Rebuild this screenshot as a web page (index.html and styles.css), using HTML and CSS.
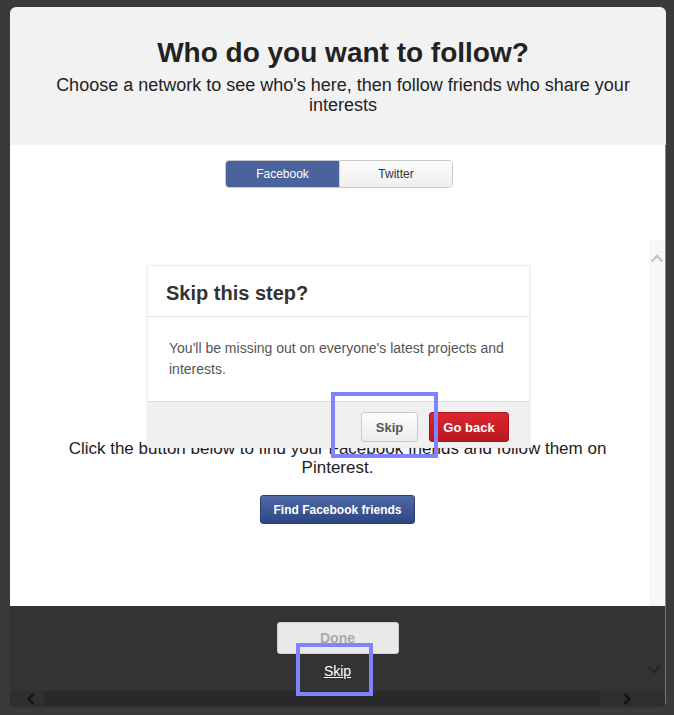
FILE: index.html
```html
<!doctype html>
<html lang="en">
<head>
    <meta charset="utf-8">
    <meta name="viewport" content="width=device-width, initial-scale=1.0">
    <title>Who do you want to follow?</title>
    <link rel="stylesheet" href="styles.css">
</head>
<body>
    <div class="modal">
        <div class="modal-header">
            <h1>Who do you want to follow?</h1>
            <p>Choose a network to see who's here, then follow friends who share your interests</p>
        </div>
        <div class="modal-content">
            <div class="tabs">
                <button class="tab active">Facebook</button>
                <button class="tab">Twitter</button>
            </div>
            <p class="find-text">Click the button below to find your Facebook friends and follow them on Pinterest.</p>
            <button class="fb-button">Find Facebook friends</button>

            <div class="v-scroll">
                <svg width="14" height="9" viewBox="0 0 14 9"><path d="M1.5 7.5 L7 2 L12.5 7.5" fill="none" stroke="#c4c4c4" stroke-width="2.4"/></svg>
            </div>

            <div class="dialog">
                <div class="dialog-header">Skip this step?</div>
                <div class="dialog-body">You'll be missing out on everyone's latest projects and interests.</div>
                <div class="dialog-footer">
                    <button class="btn-skip">Skip</button>
                    <button class="btn-back">Go back</button>
                </div>
                <div class="highlight dialog-highlight"></div>
            </div>
        </div>
        <div class="modal-footer">
            <button class="btn-done">Done</button>
            <a href="#" class="skip-link">Skip</a>
            <div class="highlight footer-highlight"></div>
            <svg class="down-arrow" width="14" height="9" viewBox="0 0 14 9"><path d="M1.5 1.5 L7 7 L12.5 1.5" fill="none" stroke="#262626" stroke-width="2.4"/></svg>
            <div class="h-scroll">
                <svg class="arrow-left" width="12" height="14" viewBox="0 0 12 14"><path d="M8.5 2 L3.5 7 L8.5 12" fill="none" stroke="#141414" stroke-width="2.6"/></svg>
                <div class="h-thumb"></div>
                <svg class="arrow-right" width="12" height="14" viewBox="0 0 12 14"><path d="M3.5 2 L8.5 7 L3.5 12" fill="none" stroke="#141414" stroke-width="2.6"/></svg>
            </div>
        </div>
    </div>
</body>
</html>
```

FILE: styles.css
```css
body {
    margin: 0;
    padding: 0;
    background-color: #3a3a3a;
    font-family: "Liberation Sans", Arial, sans-serif;
}
.modal {
    width: 656px;
    height: 701px;
    margin: 7px 0 0 10px;
    border-radius: 6px;
    overflow: hidden;
    display: flex;
    flex-direction: column;
}
.modal-header {
    height: 138px;
    box-sizing: border-box;
    padding: 30px 28px 0 38px;
    background-color: #f2f2f2;
    text-align: center;
    color: #222;
}
.modal-header h1 {
    margin: 0;
    font-size: 28px;
    line-height: 32px;
    font-weight: bold;
}
.modal-header p {
    margin: 6px 0 0;
    font-size: 18px;
    line-height: 20px;
}
.modal-content {
    position: relative;
    height: 461px;
    box-sizing: border-box;
    padding-top: 15px;
    background-color: #fff;
    border-right: 1px solid #8a8a8a;
    text-align: center;
}
.tabs {
    display: inline-flex;
    margin-left: 3px;
    border: 1px solid #c9c9c9;
    border-radius: 4px;
    overflow: hidden;
}
.tab {
    width: 113px;
    height: 26px;
    border: none;
    margin: 0;
    padding: 0;
    font-family: inherit;
    font-size: 12px;
    color: #333;
    background: linear-gradient(#fdfdfd, #efefef);
    border-left: 1px solid #d0d0d0;
}
.tab.active {
    background: #4a639c;
    color: #fff;
    border-left: none;
}
.find-text {
    width: 580px;
    margin: 251px auto 0;
    font-size: 17px;
    line-height: 19px;
    color: #222;
}
.fb-button {
    margin-top: 18px;
    width: 155px;
    height: 29px;
    border: 1px solid #2b3f75;
    border-radius: 3px;
    background: linear-gradient(#4f6aa6, #2e4684);
    color: #fff;
    font-family: inherit;
    font-size: 12px;
    font-weight: bold;
}
.v-scroll {
    position: absolute;
    right: 0;
    top: 95px;
    bottom: 0;
    width: 16px;
    background-color: #f7f7f7;
    padding-top: 14px;
    box-sizing: border-box;
}
.v-scroll svg {
    display: block;
    margin: 0 auto;
}
.dialog {
    position: absolute;
    left: 137px;
    top: 120px;
    width: 381px;
    background-color: #fff;
    border: 1px solid #ececec;
    box-shadow: 0 1px 3px rgba(0, 0, 0, 0.08);
    text-align: left;
}
.dialog-header {
    height: 51px;
    box-sizing: border-box;
    padding: 16px 18px 0;
    font-size: 20px;
    font-weight: bold;
    color: #333;
    border-bottom: 1px solid #e4e4e4;
}
.dialog-body {
    height: 84px;
    box-sizing: border-box;
    padding: 21px 20px 0 21px;
    font-size: 14px;
    line-height: 21px;
    color: #555;
}
.dialog-footer {
    height: 46px;
    box-sizing: border-box;
    padding: 10px 20px 0 0;
    background-color: #f0f0f0;
    border-top: 1px solid #dcdcdc;
    display: flex;
    justify-content: flex-end;
    gap: 11px;
}
.btn-skip, .btn-back {
    height: 30px;
    border-radius: 3px;
    font-family: inherit;
    font-size: 13px;
    font-weight: bold;
    padding: 0;
}
.btn-skip {
    width: 57px;
    border: 1px solid #c8c8c8;
    background: linear-gradient(#fdfdfd, #ececec);
    color: #555;
}
.btn-back {
    width: 80px;
    border: 1px solid #a8141b;
    background: linear-gradient(#dc2630, #b91820);
    color: #fff;
}
.highlight {
    position: absolute;
    border: 4px solid #8282ff;
    box-sizing: border-box;
}
.dialog-highlight {
    left: 183px;
    top: 126px;
    width: 107px;
    height: 66px;
}
.modal-footer {
    position: relative;
    height: 102px;
    box-sizing: border-box;
    padding-top: 16px;
    background-color: #333;
    border-right: 1px solid #777;
    display: flex;
    flex-direction: column;
    align-items: center;
}
.btn-done {
    width: 122px;
    height: 32px;
    border: 1px solid #d0d0d0;
    border-radius: 3px;
    background-color: #e9e9e9;
    color: #aaa;
    font-family: inherit;
    font-size: 14px;
    font-weight: bold;
}
.skip-link {
    margin-top: 9px;
    font-size: 14px;
    line-height: 16px;
    color: #fff;
}
.footer-highlight {
    left: 286px;
    top: 37px;
    width: 77px;
    height: 53px;
}
.down-arrow {
    position: absolute;
    right: 4px;
    top: 59px;
}
.h-scroll {
    margin-top: 12px;
    width: 100%;
    height: 15px;
    background-color: #2f2f2f;
    display: flex;
    align-items: center;
}
.arrow-left {
    margin: 0 7px 0 15px;
}
.arrow-right {
    margin: 0 32px 0 21px;
}
.h-thumb {
    flex: 1;
    height: 15px;
    background-color: #292929;
}
```
